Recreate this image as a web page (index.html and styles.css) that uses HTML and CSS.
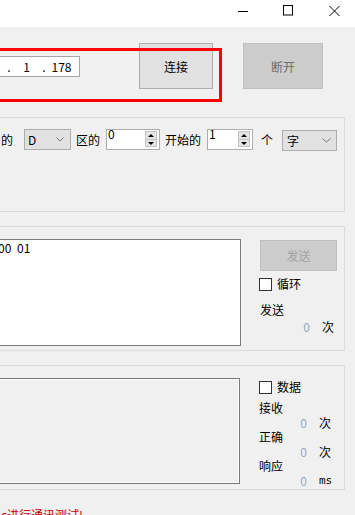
FILE: index.html
```html
<!DOCTYPE html>
<html>
<head>
    <meta charset="utf-8">
    <title>通讯测试</title>
    <link rel="stylesheet" href="styles.css">
</head>
<body>
    <div class="page">
        <div class="titlebar">
            <svg class="cap" width="10" height="12" viewBox="0 0 10 12"><line x1="0" y1="6.5" x2="10" y2="6.5" stroke="#000"/></svg>
            <svg class="cap cap-max" width="10" height="11" viewBox="0 0 10 11"><rect x="0.5" y="0.5" width="9" height="9.5" fill="none" stroke="#000"/></svg>
            <svg class="cap cap-close" width="11" height="12" viewBox="0 0 11 12"><path d="M0.5 1 L10.5 11 M10.5 1 L0.5 11" stroke="#000" fill="none"/></svg>
        </div>

        <div class="conn">
            <div class="ip">
                <span class="field"></span><span class="dot">.</span>
                <span class="field"></span><span class="dot">.</span>
                <span class="field">1</span><span class="dot">.</span>
                <span class="field">178</span>
            </div>
            <div class="btn btn-connect">连接</div>
            <div class="btn btn-off">断开</div>
        </div>

        <!-- red annotation frame -->
        <div class="mark"></div>

        <div class="group g1">
            <div class="row">
                <span>的</span>
                <div class="combo combo-area"><span>D</span><svg width="8" height="5" viewBox="0 0 8 5"><polyline points="0.5,0.5 4,4 7.5,0.5" fill="none" stroke="#777"/></svg></div>
                <span class="lbl-area">区的</span>
                <div class="spin spin-start"><span class="val">0</span><div class="arrows"><i class="up"></i><i class="down"></i></div></div>
                <span class="lbl-start">开始的</span>
                <div class="spin spin-count"><span class="val">1</span><div class="arrows"><i class="up"></i><i class="down"></i></div></div>
                <span class="lbl-unit">个</span>
                <div class="combo combo-type"><span>字</span><svg width="9" height="5" viewBox="0 0 9 5"><polyline points="0.5,0.5 4.5,4 8.5,0.5" fill="none" stroke="#777"/></svg></div>
            </div>
        </div>

        <div class="group g2">
            <div class="box box-send">00 01</div>
            <div class="side side-send">
                <div class="btn btn-send">发送</div>
                <div class="check"><span class="tick"></span><span>循环</span></div>
                <div class="label label-send">发送</div>
                <div class="count count-send"><span class="num">0</span><span class="unit">次</span></div>
            </div>
        </div>

        <div class="group g3">
            <div class="box box-recv"></div>
            <div class="side side-recv">
                <div class="check"><span class="tick"></span><span>数据</span></div>
                <div class="label label-first">接收</div>
                <div class="count"><span class="num">0</span><span class="unit">次</span></div>
                <div class="label">正确</div>
                <div class="count"><span class="num">0</span><span class="unit">次</span></div>
                <div class="label">响应</div>
                <div class="count"><span class="num">0</span><span class="unit unit-ms">ms</span></div>
            </div>
        </div>

        <div class="tip">c进行通讯测试!</div>
    </div>
</body>
</html>
```

FILE: styles.css
```css
body {
    margin: 0;
    font-family: "Noto Sans CJK SC", "Noto Sans", sans-serif;
    font-size: 12px;
    color: #000;
    background-color: #f0f0f0;
}

.page {
    position: relative;
    width: 355px;
    height: 515px;
    overflow: hidden;
    background-color: #f0f0f0;
}

.titlebar {
    display: flex;
    justify-content: flex-end;
    align-items: flex-start;
    height: 27px;
    padding: 5px 15px 0 0;
    box-sizing: border-box;
    background-color: #fff;
}

.cap {
    display: block;
}

.cap-max {
    margin-left: 35px;
}

.cap-close {
    margin-left: 36px;
}

.conn {
    display: flex;
    align-items: center;
    height: 46px;
    margin-top: 16px;
}

.ip {
    display: flex;
    width: 141px;
    height: 21px;
    margin-left: -61px;
    padding: 0 3px 0 2px;
    box-sizing: border-box;
    border: 1px solid #a5a5a5;
    background-color: #fff;
    line-height: 19px;
}

.ip .field {
    width: 29px;
    text-align: center;
}

.ip .dot {
    width: 6px;
    text-align: center;
}

.btn {
    display: flex;
    align-items: center;
    justify-content: center;
    box-sizing: border-box;
    border: 1px solid #adadad;
    background-color: #e1e1e1;
}

.btn-connect {
    width: 74px;
    height: 46px;
    margin-left: 59px;
}

.btn-off {
    width: 80px;
    height: 46px;
    margin-left: 30px;
    border-color: #bfbfbf;
    background-color: #cccccc;
    color: #6d6d6d;
}

.mark {
    position: absolute;
    top: 48px;
    left: -10px;
    width: 232px;
    height: 54px;
    box-sizing: border-box;
    border: 3px solid #ff0000;
}

.group {
    display: flex;
    align-items: flex-start;
    width: 365px;
    margin-left: -20px;
    box-sizing: border-box;
    border: 1px solid #dcdcdc;
}

.g1 {
    height: 95px;
    margin-top: 28px;
    padding: 11px 0 0 20px;
}

.g2 {
    height: 125px;
    margin-top: 14px;
    padding: 12px 0 0 5px;
}

.g3 {
    height: 125px;
    margin-top: 14px;
    padding: 12px 0 0 5px;
}

.row {
    display: flex;
    align-items: center;
    height: 21px;
    line-height: 14px;
}

.combo {
    display: flex;
    align-items: center;
    justify-content: space-between;
    height: 21px;
    padding: 0 6px 0 3px;
    box-sizing: border-box;
    border: 1px solid #adadad;
    background-color: #e1e1e1;
}

.combo svg {
    display: block;
}

.combo-area {
    width: 47px;
    margin-left: 11px;
}

.combo-type {
    width: 55px;
    margin-left: 9px;
    padding-left: 4px;
    padding-right: 5px;
    margin-top: 2px;
}

.lbl-area {
    margin-left: 5px;
}

.lbl-start {
    margin-left: 5px;
}

.lbl-unit {
    margin-left: 8px;
}

.spin {
    display: flex;
    justify-content: space-between;
    align-items: flex-start;
    height: 21px;
    margin-left: 6px;
    box-sizing: border-box;
    border: 1px solid #adadad;
    background-color: #fff;
}

.spin-start {
    width: 54px;
}

.spin-count {
    width: 46px;
}

.spin .val {
    margin: -3px 0 0 1px;
    line-height: 14px;
}

.spin .arrows {
    display: flex;
    flex-direction: column;
    width: 12px;
    height: 16px;
    margin: 1px 2px 0 0;
    box-sizing: border-box;
    border: 1px solid #c4c4c4;
    background-color: #e5e5e5;
}

.arrows i {
    flex: 1;
    position: relative;
}

.arrows .up {
    border-bottom: 1px solid #c4c4c4;
}

.arrows i::after {
    content: "";
    position: absolute;
    left: 2px;
    border-left: 3px solid transparent;
    border-right: 3px solid transparent;
}

.arrows .up::after {
    top: 2px;
    border-bottom: 3px solid #000;
}

.arrows .down::after {
    top: 2px;
    border-top: 3px solid #000;
}

.box {
    box-sizing: border-box;
    border: 1px solid #7a7a7a;
    padding: 1px 0 0 11px;
    line-height: 14px;
}

.box-send {
    width: 255px;
    height: 107px;
    background-color: #fff;
    word-spacing: 3px;
}

.box-recv {
    width: 254px;
    height: 106px;
    background-color: #f0f0f0;
    box-shadow: inset 0 0 0 1px #fafafa;
}

.side {
    display: flex;
    flex-direction: column;
    width: 80px;
    line-height: 14px;
}

.side-send {
    margin-left: 18px;
}

.side-recv {
    margin-left: 19px;
}

.btn-send {
    width: 77px;
    height: 31px;
    margin: 1px 0 0 1px;
    border-color: #bfbfbf;
    background-color: #cccccc;
    color: #a3a3a3;
}

.check {
    display: flex;
    align-items: center;
    height: 14px;
}

.side-send .check {
    margin-top: 6px;
}

.side-recv .check {
    margin-top: 2px;
}

.tick {
    width: 13px;
    height: 13px;
    margin-right: 5px;
    box-sizing: border-box;
    border: 1px solid #333;
    background-color: #fff;
}

.label-send {
    margin: 12px 0 0 1px;
}

.count-send {
    margin-top: 2px;
}

.label-first {
    margin-top: 7px;
}

.count {
    display: flex;
    line-height: 15px;
}

.count .num {
    width: 48px;
    text-align: right;
    color: #93a8c6;
}

.count-send .num {
    width: 51px;
}

.count .unit {
    margin-left: 12px;
}

.unit-ms {
    font-family: "DejaVu Sans Mono", monospace;
    font-size: 11px;
}

.tip {
    margin: 18px 0 0 1px;
    line-height: 14px;
    color: #c80000;
}
```
